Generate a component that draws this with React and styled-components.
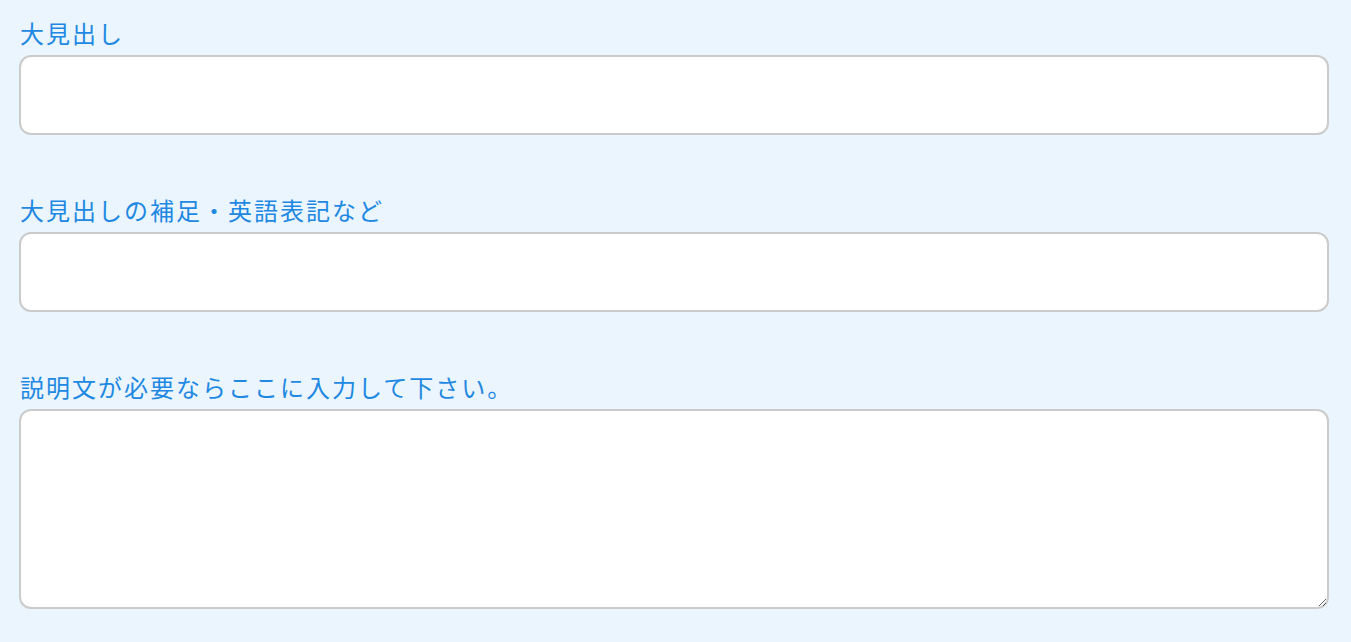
import styled, { createGlobalStyle } from 'styled-components';

const GlobalStyle = createGlobalStyle`
  html, body {
    margin: 0;
    padding: 0;
    background: #eaf5fe;
  }
  body {
    font-family: "Noto Sans CJK JP", "Noto Sans", sans-serif;
  }
`;

const Form = styled.form`
  display: flex;
  flex-direction: column;
  gap: 58px;
  padding: 16px 22px 34px 19px;
  min-height: 642px;
  box-sizing: border-box;
`;

const Field = styled.div`
  display: flex;
  flex-direction: column;
`;

const Label = styled.label`
  display: block;
  height: 34px;
  line-height: 34px;
  margin: 0 0 5px 1px;
  font-size: 24px;
  color: #1e88e2;
  letter-spacing: 2px;
  white-space: nowrap;
`;

const boxStyle = `
  width: 100%;
  box-sizing: border-box;
  border: 2px solid #cbcbcb;
  border-radius: 12px;
  background: #fff;
  font-family: "Noto Sans CJK JP", sans-serif;
  font-size: 18px;
  padding: 8px 12px;
  outline: none;
`;

const TextInput = styled.input`
  ${boxStyle}
  height: 80px;
`;

const TextArea = styled.textarea`
  ${boxStyle}
  height: 200px;
  display: block;
  resize: both;
`;

const fields = [
  { id: 'title', label: '大見出し' },
  { id: 'sub', label: '大見出しの補足・英語表記など' },
];

const App = () => {
  return (
    <>
      <GlobalStyle />
      <Form onSubmit={(e) => e.preventDefault()}>
        {fields.map((f) => (
          <Field key={f.id}>
            <Label htmlFor={f.id}>{f.label}</Label>
            <TextInput id={f.id} type="text" />
          </Field>
        ))}
        <Field>
          <Label htmlFor="desc">説明文が必要ならここに入力して下さい。</Label>
          <TextArea id="desc" />
        </Field>
      </Form>
    </>
  );
};

export default App;
